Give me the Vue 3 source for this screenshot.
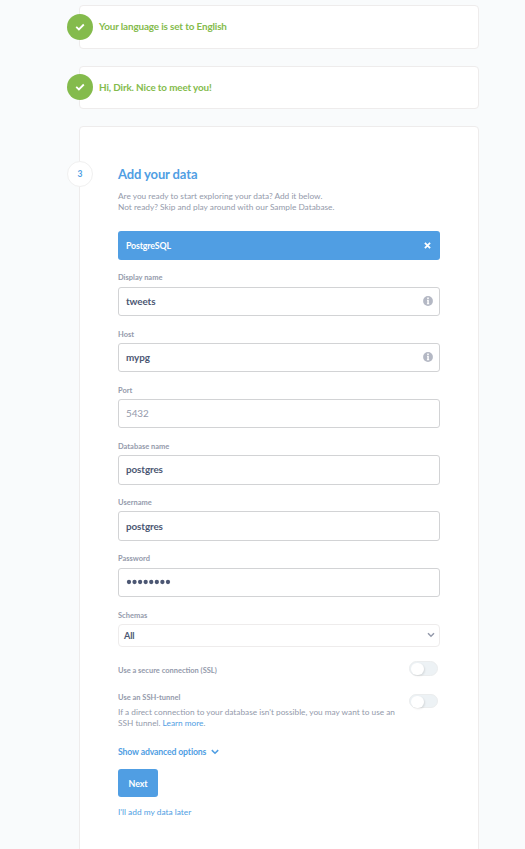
<script setup>
const doneSteps = [
  { text: 'Your language is set to English', cls: 'first' },
  { text: 'Hi, Dirk. Nice to meet you!', cls: 'second' },
]
const fields = [
  { label: 'Display name', value: 'tweets', info: true },
  { label: 'Host', value: 'mypg', info: true },
  { label: 'Port', value: '5432', placeholder: true },
  { label: 'Database name', value: 'postgres' },
  { label: 'Username', value: 'postgres', low: true },
  { label: 'Password', value: '', dots: 8 },
]
</script>

<template>
  <main class="page">
    <section v-for="step in doneSteps" :key="step.text" class="card done" :class="step.cls">
      <span class="badge check">
        <svg width="10" height="8" viewBox="0 0 10 8"><path d="M1.2 3.8 3.9 6.4 8.8 1.5" /></svg>
      </span>
      <span class="done-text">{{ step.text }}</span>
    </section>

    <section class="card active">
      <span class="badge number">3</span>
      <h2>Add your data</h2>
      <p class="intro">Are you ready to start exploring your data? Add it below.<br />Not ready? Skip and play around with our Sample Database.</p>

      <div class="engine">
        <span>PostgreSQL</span>
        <svg width="7" height="7" viewBox="0 0 7 7"><path d="M.9.9 6.1 6.1M6.1.9.9 6.1" /></svg>
      </div>

      <div v-for="field in fields" :key="field.label" class="field">
        <label>{{ field.label }}</label>
        <div class="input" :class="{ placeholder: field.placeholder, low: field.low }">
          <svg v-if="field.dots" class="dots" width="46" height="6" viewBox="0 0 46 6">
            <circle v-for="n in field.dots" :key="n" :cx="n * 5.57 - 2.6" cy="3" r="2.15" />
          </svg>
          <span v-else>{{ field.value }}</span>
          <svg v-if="field.info" class="info" width="10" height="10" viewBox="0 0 10 10">
            <circle cx="5" cy="5" r="4.9" />
            <path d="M4.2 1.6h1.6v1.4H4.2zM4 3.8h1.8v3.5h.4v.9H3.9v-.9h.4V4.7H4z" />
          </svg>
        </div>
      </div>

      <div class="schemas">
        <label>Schemas</label>
        <div class="select">
          <span>All</span>
          <svg class="chevron" width="8" height="6" viewBox="0 0 8 6"><path d="M1 1.3 4 4.2 7 1.3" /></svg>
        </div>
      </div>

      <div class="toggle-row ssl">
        <label>Use a secure connection (SSL)</label>
        <span class="toggle"></span>
      </div>
      <div class="toggle-row ssh">
        <div>
          <label>Use an SSH-tunnel</label>
          <p>If a direct connection to your database isn't possible, you may want to use an<br />SSH tunnel. <a>Learn more</a>.</p>
        </div>
        <span class="toggle"></span>
      </div>

      <a class="advanced">
        <span>Show advanced options</span>
        <svg class="chevron" width="8" height="6" viewBox="0 0 8 6"><path d="M.8 1.1 4 4.2 7.2 1.1" /></svg>
      </a>
      <button class="next">Next</button>
      <a class="later">I'll add my data later</a>
    </section>
  </main>
</template>

<style>
body {
  background: #f9fbfc;
  overflow: hidden;
}
</style>

<style scoped>
.page {
  box-sizing: border-box;
  height: 849px;
  overflow: hidden;
  padding: 5px 46px 0 79px;
  font-family: Lato, sans-serif;
  color: #4c5773;
}
.card {
  position: relative;
  box-sizing: border-box;
  width: 400px;
  background: #fff;
  border: 1px solid #eeecec;
  border-radius: 4px;
}
.done {
  display: flex;
  align-items: center;
  padding: 0 0 2px 19px;
  color: #84bb4c;
  font-size: 9.9px;
  letter-spacing: -0.13px;
  font-weight: 700;
}
.first {
  height: 44px;
  margin-bottom: 17px;
}
.second {
  height: 43px;
  margin-bottom: 17px;
  padding-bottom: 1px;
}
.badge {
  position: absolute;
  left: -13px;
  box-sizing: border-box;
  width: 26px;
  height: 26px;
  border-radius: 50%;
  display: flex;
  align-items: center;
  justify-content: center;
}
.check {
  top: 8px;
  background: #84bb4c;
}
.second .check {
  top: 7px;
}
svg {
  display: block;
  flex: none;
}
.check svg path {
  fill: none;
  stroke: #fff;
  stroke-width: 1.8;
}
.active {
  height: 760px;
  padding: 39px 38px 0;
  border-radius: 4px 4px 0 0;
}
.number {
  top: 34px;
  background: #fff;
  border: 1px solid #f0f0f0;
  color: #509ee3;
  font-size: 8.5px;
  font-weight: 700;
}
h2 {
  margin: 0;
  font-size: 13px;
  letter-spacing: -0.12px;
  line-height: 16px;
  font-weight: 700;
  color: #509ee3;
}
.intro {
  margin: 9px 0 0;
  font-size: 8.3px;
  line-height: 11px;
  color: #949aab;
  white-space: nowrap;
}
.engine {
  display: flex;
  align-items: center;
  justify-content: space-between;
  box-sizing: border-box;
  height: 29px;
  margin-top: 18px;
  padding: 0 9.5px 0 8px;
  border-radius: 3px;
  background: #509ee3;
  color: #fff;
  font-size: 8.8px;
  letter-spacing: -0.15px;
  font-weight: 700;
}
.engine svg {
  margin-bottom: 1px;
}
.engine path {
  stroke: #fff;
  stroke-width: 1.8;
}
label {
  display: block;
  font-size: 7.48px;
  line-height: 10px;
  font-weight: 700;
  color: #949aab;
}
.field {
  box-sizing: border-box;
  height: 56.1px;
  padding-top: 12.9px;
}
.field + .field {
  padding-top: 13.7px;
}
.field + .field .input {
  margin-top: 3.38px;
}
.input {
  display: flex;
  align-items: center;
  justify-content: space-between;
  box-sizing: border-box;
  height: 29.2px;
  margin-top: 4.18px;
  padding: 0 6.5px 1.5px 7px;
  border: 1px solid #d2d3d5;
  border-radius: 3px;
  font-size: 9.9px;
  letter-spacing: -0.1px;
  font-weight: 700;
}
.input.low {
  padding-bottom: 0;
}
.placeholder {
  color: #949aab;
  font-weight: 400;
}
.info {
  fill: #b4b8c4;
}
.info path {
  fill: #fff;
}
.dots {
  margin-top: 2px;
  fill: #4c5773;
}
.schemas {
  padding-top: 14.3px;
}
.select {
  display: flex;
  align-items: center;
  justify-content: space-between;
  box-sizing: border-box;
  height: 23px;
  margin-top: 3.1px;
  padding: 0 4px 0 5px;
  border: 1px solid #eeecec;
  border-radius: 4px;
  font-size: 9.1px;
  letter-spacing: -0.1px;
  font-weight: 700;
}
.select span {
  padding-top: 1px;
}
.chevron path {
  fill: none;
  stroke: currentColor;
  stroke-width: 1.5;
}
.select .chevron {
  color: #949aab;
}
.toggle-row {
  display: flex;
  justify-content: space-between;
  padding-right: 2px;
}
.ssl {
  height: 15px;
  margin-top: 14px;
}
.ssl label {
  margin-top: 5px;
}
.ssh {
  height: 35px;
  margin-top: 18px;
}
.ssh label {
  margin-top: -1px;
}
.ssh p {
  margin: 4px 0 0;
  font-size: 8.27px;
  line-height: 11px;
  color: #949aab;
  white-space: nowrap;
}
.ssh p a {
  color: #509ee3;
}
.toggle {
  flex: none;
  box-sizing: border-box;
  width: 29px;
  height: 15px;
  padding: 1px;
  border: 1px solid #ebedee;
  border-radius: 8px;
  background: #edf2f5;
}
.ssh .toggle {
  height: 14px;
}
.toggle::before {
  content: '';
  display: block;
  width: 12.5px;
  height: 12.5px;
  border-radius: 50%;
  background: #fff;
  box-shadow: 1px 1px 2px rgba(0, 0, 0, 0.1);
}
.advanced {
  display: flex;
  align-items: center;
  gap: 5px;
  height: 12px;
  margin-top: 17px;
  color: #509ee3;
  font-size: 8.7px;
  letter-spacing: -0.15px;
  font-weight: 700;
}
.next {
  display: block;
  width: 40px;
  height: 28px;
  margin: 11px 0 0;
  padding: 2px 0 0;
  border: 0;
  border-radius: 3px;
  background: #509ee3;
  color: #fff;
  font: 700 8.9px Lato, sans-serif;
  letter-spacing: -0.1px;
}
.later {
  display: block;
  margin-top: 10px;
  font-size: 8.35px;
  line-height: 11px;
  color: #509ee3;
}
</style>
